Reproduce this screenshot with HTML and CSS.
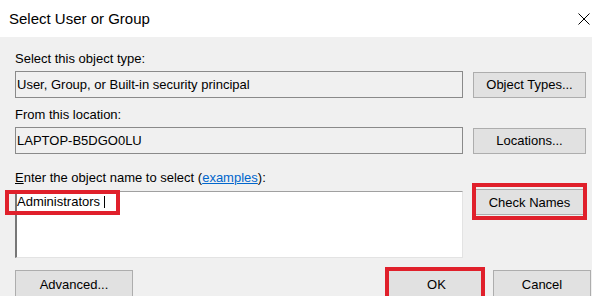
FILE: index.html
```html
<!DOCTYPE html>
<html lang="en">
<head>
    <meta charset="UTF-8">
    <title>Select User or Group</title>
    <link rel="stylesheet" href="styles.css">
</head>
<body>

<div class="dialog">
    <div class="titlebar">
        <span class="title">Select User or Group</span>
        <svg class="close" width="12" height="12" viewBox="0 0 12 12">
            <path d="M0.5 0.5 L11.5 11.5 M11.5 0.5 L0.5 11.5" stroke="#000" stroke-width="1" fill="none"/>
        </svg>
    </div>

    <div class="content">
        <div class="label">Select this object type:</div>
        <div class="row">
            <div class="field">User, Group, or Built-in security principal</div>
            <button class="btn">Object Types...</button>
        </div>

        <div class="label label-gap">From this location:</div>
        <div class="row">
            <div class="field">LAPTOP-B5DGO0LU</div>
            <button class="btn">Locations...</button>
        </div>

        <div class="label label-enter"><u>E</u>nter the object name to select (<a href="#">examples</a>):</div>
        <div class="row row-names">
            <div class="names">
                <span class="name-text">Administrators</span><span class="caret"></span>
                <span class="mark mark-admin"></span>
            </div>
            <div class="btn-wrap">
                <button class="btn">Check Names</button>
                <span class="mark mark-check"></span>
            </div>
        </div>

        <div class="footer">
            <button class="btn btn-advanced">Advanced...</button>
            <div class="footer-right">
                <div class="btn-wrap">
                    <button class="btn btn-ok">OK</button>
                    <span class="mark mark-ok"></span>
                </div>
                <button class="btn btn-cancel">Cancel</button>
            </div>
        </div>
    </div>
</div>

</body>
</html>
```

FILE: styles.css
```css
html, body {
    margin: 0;
    padding: 0;
    overflow: hidden;
}
body {
    font-family: "Liberation Sans", Arial, sans-serif;
    font-size: 13px;
    color: #000;
    background-color: #f0f0f0;
}
.dialog {
    width: 592px;
    height: 296px;
    background-color: #f0f0f0;
}
.titlebar {
    height: 37px;
    background-color: #fff;
    display: flex;
    align-items: center;
    justify-content: space-between;
    padding: 0 2px 0 9px;
}
.title {
    font-size: 15px;
}
.close {
    display: block;
    margin-top: 1px;
}
.content {
    padding: 14px 6px 0 15px;
}
.label {
    line-height: 16px;
    margin-bottom: 4px;
}
.label-gap {
    margin-top: 9px;
}
.label-enter {
    margin-top: 16px;
    margin-bottom: 3px;
}
.label-enter a {
    color: #0066cc;
}
.row {
    display: flex;
    align-items: center;
    gap: 10px;
}
.field {
    box-sizing: border-box;
    width: 448px;
    height: 27px;
    border: 1px solid #8a8a8a;
    padding-left: 1px;
    line-height: 25px;
    white-space: nowrap;
}
.btn {
    box-sizing: border-box;
    width: 113px;
    height: 26px;
    margin: 0;
    padding: 0;
    border: 1px solid #adadad;
    background-color: #e1e1e1;
    font-family: inherit;
    font-size: 13px;
    color: #000;
}
.row-names {
    align-items: flex-start;
}
.names {
    position: relative;
    box-sizing: border-box;
    width: 448px;
    height: 67px;
    margin-top: 2px;
    background-color: #fff;
    border-top: 1px solid #a0a0a0;
    border-left: 2px solid #777;
    border-right: 1px solid #e3e3e3;
    border-bottom: 1px solid #e3e3e3;
    padding: 2px 0 0 0;
    line-height: 15px;
}
.caret {
    display: inline-block;
    width: 1px;
    height: 12px;
    margin-left: 4px;
    vertical-align: -2px;
    background-color: #000;
}
.btn-wrap {
    position: relative;
}
.mark {
    position: absolute;
    box-sizing: border-box;
    border: 4px solid #e0202b;
}
.mark-admin {
    left: -12px;
    top: -2px;
    width: 115px;
    height: 25px;
}
.mark-check {
    left: -1px;
    top: -6px;
    width: 115px;
    height: 37px;
}
.footer {
    display: flex;
    justify-content: space-between;
    margin-top: 12px;
    margin-right: -5px;
}
.footer .btn {
    height: 28px;
}
.btn-advanced {
    width: 118px;
}
.footer-right {
    display: flex;
    gap: 8px;
}
.btn-ok {
    width: 97px;
}
.btn-cancel {
    width: 98px;
}
.mark-ok {
    left: -3px;
    top: -3px;
    width: 100px;
    height: 34px;
}
```
